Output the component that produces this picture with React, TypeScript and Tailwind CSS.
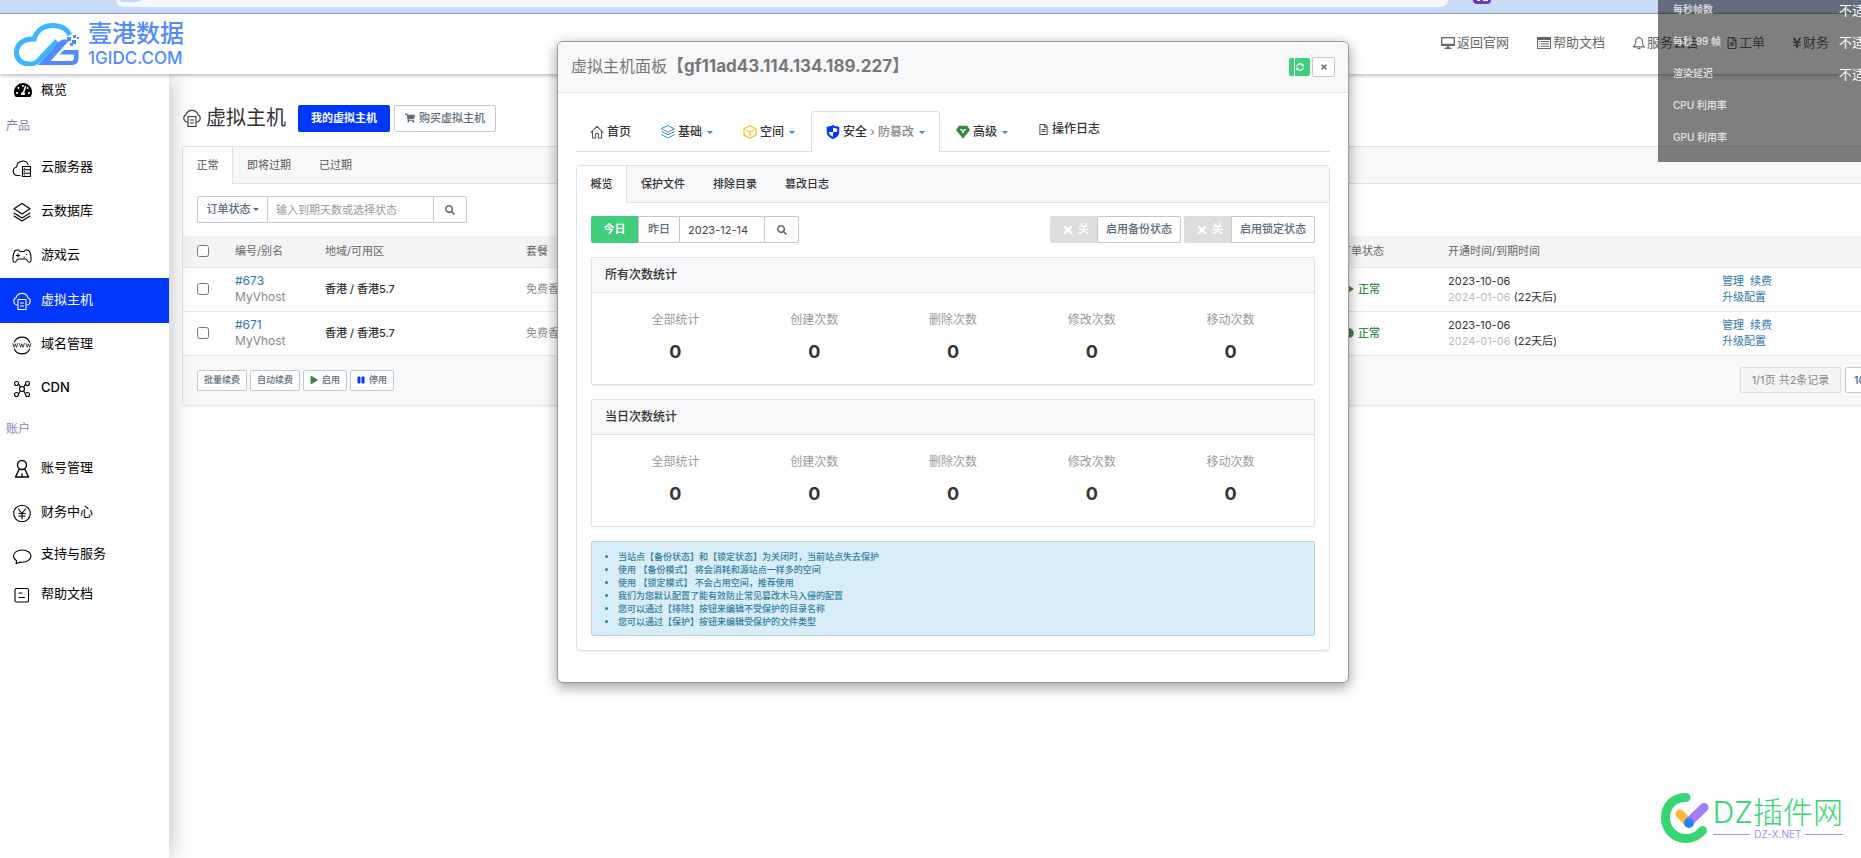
import React, { useState } from 'react';
import {
  FaCircle,
  FaPause,
  FaPlay,
  FaRegFileAlt,
  FaSearch,
  FaShoppingCart,
  FaSyncAlt,
  FaTachometerAlt,
  FaTimes,
  FaYenSign,
} from 'react-icons/fa';

type IconProps = { className?: string };

interface SvgProps extends IconProps {
  children: React.ReactNode;
}

const LineIcon: React.FC<SvgProps> = ({ className = 'size-5', children }) => (
  <svg
    viewBox="0 0 20 20"
    fill="none"
    stroke="currentColor"
    strokeWidth="1.1"
    strokeLinejoin="round"
    strokeLinecap="round"
    className={className}
    aria-hidden="true"
  >
    {children}
  </svg>
);

const CloudServerIcon: React.FC<IconProps> = ({ className }) => (
  <LineIcon className={className}>
    <path d="M8 17.500H5.500a4.300 4.300 0 0 1-.8-8.500 6 6 0 0 1 11.500-2.300" />
    <path d="M10.500 8.500h8v10h-8zM10.500 11.800h8M10.500 15.200h8M12.500 10.200h.2M12.500 13.500h.2M12.500 17h.2" />
  </LineIcon>
);

const LayersIcon: React.FC<IconProps> = ({ className }) => (
  <LineIcon className={className}>
    <path d="M10 1.500 18 6.700 10 12 2 6.700z" />
    <path d="m2 11 8 5 8-5M2 14l8 5 8-5" />
  </LineIcon>
);

const GamepadIcon: React.FC<IconProps> = ({ className }) => (
  <LineIcon className={className}>
    <path d="M5 4h1.500l1.300 1.500h4.400L13.500 4H15c2 0 2.700 1 3.200 3 .9 3.200 1 6.500.6 8-.5 1.500-1.800 1.700-2.800.5-.9-1.200-1.200-2.500-2.500-2.500h-7c-1.300 0-1.600 1.300-2.500 2.500-1 1.200-2.300 1-2.800-.5-.4-1.500-.3-4.800.6-8C2.300 5 3 4 5 4z" />
    <path d="M4.500 9.500h3M6 8v3M12 11h.3M14.500 8.500h.3" />
  </LineIcon>
);

const VhostIcon: React.FC<IconProps> = ({ className }) => (
  <LineIcon className={className}>
    <path d="M5 14A3.800 3.800 0 0 1 4 6.800a6.300 6.300 0 0 1 12 0A3.800 3.800 0 0 1 15 14" />
    <path d="M6 8.500h8v10H6zM8.500 12h3M8.500 15h3" />
  </LineIcon>
);

const GlobeWwwIcon: React.FC<IconProps> = ({ className }) => (
  <LineIcon className={className}>
    <path d="M2.300 7a8.500 8.500 0 0 1 15.400 0M2.300 14a8.500 8.500 0 0 0 15.400 0" />
    <path
      strokeWidth="0.7"
      d="m.8 8.500 1.300 3.800 1.200-3.500 1.200 3.500 1.300-3.800M7.400 8.500l1.300 3.800 1.200-3.500 1.200 3.500 1.300-3.800M14 8.500l1.300 3.800 1.200-3.500 1.200 3.500L19 8.500"
    />
  </LineIcon>
);

const CdnIcon: React.FC<IconProps> = ({ className }) => (
  <LineIcon className={className}>
    <circle cx="4.500" cy="4.500" r="2" />
    <circle cx="15.500" cy="4.500" r="2" />
    <circle cx="4.500" cy="15.500" r="2" />
    <circle cx="15.500" cy="15.500" r="2" />
    <circle cx="10" cy="10" r="2.500" />
    <path d="M6.500 4.800 8.300 8M13.500 4.800 11.700 8M6.500 15.200l1.800-3.200M13.500 15.200 11.700 12" />
  </LineIcon>
);

const UserIcon: React.FC<IconProps> = ({ className }) => (
  <LineIcon className={className}>
    <circle strokeWidth="1.400" cx="10" cy="6" r="4.500" />
    <path strokeWidth="1.400" d="M7 10.500 3.500 18h13L13 10.500M10 15v3" />
  </LineIcon>
);

const YenCircleIcon: React.FC<IconProps> = ({ className }) => (
  <LineIcon className={className}>
    <circle cx="10" cy="10.500" r="8.300" />
    <path d="m6.500 6 3.500 4.500L13.500 6M10 10.500V16M6.800 10.500h6.400M6.800 13h6.400" />
  </LineIcon>
);

const ChatIcon: React.FC<IconProps> = ({ className }) => (
  <LineIcon className={className}>
    <path d="M4 18.500c.5-1 .6-1.700.6-2.700C2.700 14.700 1.500 13 1.500 11c0-3.700 4-6 8.800-6s8.700 2.600 8.700 6-3.900 6.200-8.700 6.200c-1 0-1.800-.1-2.600-.2-1.100.8-2.300 1.300-3.700 1.500z" />
  </LineIcon>
);

const DocIcon: React.FC<IconProps> = ({ className }) => (
  <LineIcon className={className}>
    <rect x="3" y="3.500" width="13.500" height="13.500" rx="1.500" />
    <path d="M7 8h3M7 12.500h5.500" />
  </LineIcon>
);

const HomeIcon: React.FC<IconProps> = ({ className }) => (
  <LineIcon className={className}>
    <path strokeWidth="1.500" d="M1.500 10.500 10 2l8.500 8.500M3.500 9v9.500H8V12h4v6.500h4.500V9" />
  </LineIcon>
);

const CubeIcon: React.FC<IconProps> = ({ className }) => (
  <LineIcon className={className}>
    <path strokeWidth="1.800" d="M10 1 18.500 5.500v9L10 19l-8.500-4.500v-9z" />
    <path strokeWidth="1.800" d="M5.500 7.500 10 10l4.500-2.500M10 10v5" />
  </LineIcon>
);

const StackIcon: React.FC<IconProps> = ({ className }) => (
  <LineIcon className={className}>
    <path strokeWidth="1.400" d="M10 1 19 5.500 10 10 1 5.500z" />
    <path strokeWidth="1.400" d="m1 9.500 9 4.500 9-4.500M1 14l9 4.500 9-4.500" />
  </LineIcon>
);

const ShieldIcon: React.FC<IconProps> = ({ className }) => (
  <svg viewBox="0 0 20 20" className={className} aria-hidden="true">
    <path fill="#0037ff" d="M10 0c2.500 1.800 5.500 2.300 9 2.500v7c0 5-3.500 8.500-9 10.500-5.500-2-9-5.500-9-10.500v-7C4.500 2.300 7.500 1.800 10 0z" />
    <path fill="#fff" d="M10 3.500c2 1 3.800 1.300 6 1.500v5h-6zM4 10h6v6.800c-3.500-1.500-5.700-3.500-6-6.800z" />
  </svg>
);

const GemIcon: React.FC<IconProps> = ({ className }) => (
  <svg viewBox="0 0 20 20" className={className} aria-hidden="true">
    <path fill="#3c873f" d="M4 1h12l4 6-10 12.500L0 7z" />
    <path fill="none" stroke="#fff" strokeWidth="1.800" d="M6 6.500h2l2 4 2-4h2" />
  </svg>
);

const MonitorIcon: React.FC<IconProps> = ({ className }) => (
  <svg viewBox="0 0 16 14" className={className} aria-hidden="true">
    <path fill="currentColor" fillRule="evenodd" d="M1 1h14v9H1zM2.300 2.200v5.600h11.400V2.200zM7 10h2v1.500H7zM4.500 11.500h7V13h-7z" />
  </svg>
);

const ListIcon: React.FC<IconProps> = ({ className }) => (
  <svg viewBox="0 0 16 14" className={className} aria-hidden="true">
    <path fill="currentColor" fillRule="evenodd" d="M1 1h14v12H1zM2 4v8h12V4z" />
    <path stroke="currentColor" strokeWidth="1" d="M3 5.500h1M5 5.500h8M3 7.800h1M5 7.800h8M3 10.200h1M5 10.200h8" />
  </svg>
);

const BellIcon: React.FC<IconProps> = ({ className }) => (
  <LineIcon className={className}>
    <path strokeWidth="1.600" d="M10 2.500c-3.500 0-4.800 3-4.800 6.500 0 4-1.200 5-3.200 6.500h16c-2-1.500-3.200-2.500-3.200-6.500 0-3.500-1.300-6.500-4.800-6.500zM10 1v1M8.500 18h3" />
  </LineIcon>
);

const Caret: React.FC<IconProps> = ({ className = 'ml-0.5 text-[#3087d0]' }) => (
  <svg viewBox="0 0 8 4" className={`h-[3px] w-1.5 shrink-0 fill-current ${className}`} aria-hidden="true">
    <path d="M0 0h8L4 4z" />
  </svg>
);

const Logo: React.FC = () => (
  <a href="#home" className="flex items-center gap-2 text-[#4f8bff]" aria-label="壹港数据">
    <svg viewBox="0 0 66 44" className="h-11 w-[66px]" fill="none" aria-hidden="true">
      <path
        d="M56 13C50 1.500 31 0 23 11c-1.500 2.200-2.300 4-2.800 6C10 16 2.500 22 2.500 30.500 2.500 38 8 42 16 42c4 0 7-1.500 9.500-4.500L43 19"
        stroke="#3db5fb"
        strokeWidth="5"
      />
      <path d="M24 43 45 20c2-2 3.500-2.500 6-2.500h5L36.500 39H57c2 0 3-1 3-3v-3.500H45.500L50 28h14.500v8.500c0 4-2.500 6.500-6.500 6.500z" fill="#4f8bff" />
      <path d="M53 15h4v4h-4zM58 18h4v4h-4zM59 13h3v3h-3zM63 15h2v2h-2zM56 21h3v3h-3z" fill="#4f8bff" />
    </svg>
    <span className="flex flex-col">
      <span className="text-2xl leading-6 font-medium">壹港数据</span>
      <span className="mt-1 text-[17px] leading-4 font-medium">1GIDC.COM</span>
    </span>
  </a>
);

interface MenuItem {
  label: string;
  icon: React.FC<IconProps>;
  height?: string;
  active?: boolean;
}

const PRODUCTS: MenuItem[] = [
  { label: '云服务器', icon: CloudServerIcon },
  { label: '云数据库', icon: LayersIcon },
  { label: '游戏云', icon: GamepadIcon },
  { label: '虚拟主机', icon: VhostIcon, height: 'h-[45px]', active: true },
  { label: '域名管理', icon: GlobeWwwIcon },
  { label: 'CDN', icon: CdnIcon },
];

const ACCOUNT: MenuItem[] = [
  { label: '账号管理', icon: UserIcon },
  { label: '财务中心', icon: YenCircleIcon },
  { label: '支持与服务', icon: ChatIcon, height: 'h-10' },
  { label: '帮助文档', icon: DocIcon, height: 'h-10' },
];

const MenuLink: React.FC<{ item: MenuItem }> = ({ item }) => {
  const Icon = item.icon;
  return (
    <li>
      <a
        href="#menu"
        className={`flex items-center gap-[9px] pl-3 text-[13px] ${item.height ?? 'h-11'} ${
          item.active ? 'bg-[#0037ff] text-white' : 'text-black'
        }`}
      >
        <Icon className="size-5 shrink-0" />
        <span className={item.label === 'CDN' ? 'pb-0.5 font-medium' : 'pb-0.5'}>{item.label}</span>
      </a>
    </li>
  );
};

const Sidebar: React.FC = () => (
  <aside className="relative z-10 w-[169px] shrink-0 bg-white shadow-[0_0_24px_rgba(0,0,0,0.28)]">
    <a href="#overview" className="flex h-8 items-center gap-[9px] pl-3.5 text-[13px] text-black">
      <FaTachometerAlt className="size-[18px]" />
      概览
    </a>
    <h2 className="flex h-10 items-center pl-1.5 text-xs text-[#7b83b4]">产品</h2>
    <ul>
      {PRODUCTS.map((item) => (
        <MenuLink key={item.label} item={item} />
      ))}
    </ul>
    <h2 className="flex h-9 items-center pl-1.5 text-xs text-[#7b83b4]">账户</h2>
    <ul>
      {ACCOUNT.map((item) => (
        <MenuLink key={item.label} item={item} />
      ))}
    </ul>
  </aside>
);

const Header: React.FC = () => (
  <header className="relative z-20 flex h-[60px] items-center justify-between bg-white pr-8 pl-3.5 shadow-[0_1px_4px_rgba(0,0,0,0.35)]">
    <Logo />
    <nav className="flex items-center gap-[27px] pb-0.5 text-[13px] text-[#666] [&_a]:flex [&_a]:items-center [&_a]:gap-px">
      <a href="#site"><MonitorIcon className="h-3.5 w-4" />返回官网</a>
      <a href="#docs"><ListIcon className="h-3.5 w-4" />帮助文档</a>
      <a href="#notice"><BellIcon className="size-3.5" />服务公告</a>
      <a href="#ticket"><FaRegFileAlt className="h-3 w-3" />工单</a>
      <a href="#finance"><FaYenSign className="h-3 w-2.5" />财务</a>
    </nav>
  </header>
);

const HOSTS = [
  { id: '#673', name: 'MyVhost', icon: FaPlay },
  { id: '#671', name: 'MyVhost', icon: FaCircle },
];

const OUTLINE = 'border border-[#c5c9cd] bg-white font-medium text-[#5a6b7b]';
const SMALL_BTN = `flex h-[21px] items-center gap-1 rounded-xs px-1.5 text-[9px] ${OUTLINE}`;

const HostList: React.FC = () => (
  <main className="min-w-0 flex-1 overflow-hidden pt-[30px] pl-[13px]">
    <div className="flex items-center">
      <VhostIcon className="size-5 text-[#333]" />
      <h1 className="ml-1 text-xl leading-7 text-[#333]">虚拟主机</h1>
      <button className="ml-3 h-[27px] rounded-xs bg-[#0037ff] px-[13px] text-[11px] font-bold text-white">我的虚拟主机</button>
      <button className={`ml-1 flex h-[27px] items-center gap-1 rounded-xs px-2.5 text-[11px] ${OUTLINE}`}>
        <FaShoppingCart className="size-2.5" />
        购买虚拟主机
      </button>
    </div>

    <section className="mt-3.5 min-w-[1740px] rounded-sm border border-[#dee2e8] bg-white shadow-xs">
      <div className="flex h-[37px] border-b border-[#dee2e8] bg-[#f7f8fa] text-[11px] text-[#555]">
        <button className="-mb-px w-[50px] border-r border-[#dee2e8] bg-white">正常</button>
        <button className="px-3.5">即将过期</button>
        <button className="px-3.5">已过期</button>
      </div>

      <div className="flex px-3.5 pt-3 pb-[13px] text-[11px]">
        <button className={`flex h-[27px] w-[71px] items-center justify-center gap-0.5 rounded-l-xs ${OUTLINE}`}>
          订单状态
          <Caret className="text-[#5a6b7b]" />
        </button>
        <input
          aria-label="输入到期天数或选择状态"
          placeholder="输入到期天数或选择状态"
          className="h-[27px] w-[165px] border-y border-[#c5c9cd] px-2 placeholder:text-[#999]"
        />
        <button aria-label="搜索" className={`flex h-[27px] w-[34px] items-center justify-center rounded-r-xs ${OUTLINE}`}>
          <FaSearch className="size-2.5" />
        </button>
      </div>

      <table className="w-full table-fixed text-left text-[11px] leading-4">
        <colgroup>
          <col className="w-[52px]" />
          <col className="w-[90px]" />
          <col className="w-[201px]" />
          <col className="w-[814px]" />
          <col className="w-[108px]" />
          <col className="w-[274px]" />
          <col />
        </colgroup>
        <thead>
          <tr className="h-[31px] border-b border-[#e5e7e9] bg-[#f4f4f4] text-[#666] [&>th]:font-normal">
            <th className="pl-3.5"><input type="checkbox" aria-label="全选" className="block size-3" /></th>
            <th>编号/别名</th>
            <th>地域/可用区</th>
            <th>套餐</th>
            <th>订单状态</th>
            <th>开通时间/到期时间</th>
            <th />
          </tr>
        </thead>
        <tbody>
          {HOSTS.map(({ id, name, icon: Icon }) => (
            <tr key={id} className="h-11 border-b border-[#e5e7e9] text-[#333]">
              <td className="pl-3.5"><input type="checkbox" aria-label={id} className="block size-3" /></td>
              <td className="text-xs leading-4">
                <a href="#host" className="block text-[#3079a8]">{id}</a>
                <span className="text-[#888]">{name}</span>
              </td>
              <td className="font-medium">香港 / 香港5.7</td>
              <td className="text-[#888]">免费香港</td>
              <td className="font-medium text-[#3c873f]">
                <span className="flex items-center gap-1 pl-1"><Icon className="size-2.5" />正常</span>
              </td>
              <td>
                2023-10-06
                <br />
                <span className="text-[#bbb]">2024-01-06</span> (22天后)
              </td>
              <td className="text-[#3079a8]">
                <a href="#manage" className="mr-1.5">管理</a>
                <a href="#renew">续费</a>
                <br />
                <a href="#upgrade">升级配置</a>
              </td>
            </tr>
          ))}
        </tbody>
      </table>

      <div className="flex h-[49px] items-center justify-between bg-[#f7f8fa] px-3.5">
        <div className="flex gap-[3px]">
          <button className={SMALL_BTN}>批量续费</button>
          <button className={SMALL_BTN}>自动续费</button>
          <button className={SMALL_BTN}><FaPlay className="size-2 text-[#3c873f]" />启用</button>
          <button className={SMALL_BTN}><FaPause className="size-2 text-[#0037ff]" />停用</button>
        </div>
        <div className="flex gap-1 text-[11px]">
          <span className="flex h-[26px] w-[101px] items-center justify-center rounded-xs border border-[#ddd] bg-[#f4f4f4] text-[#888]">
            1/1页 共2条记录
          </span>
          <select aria-label="每页条数" className={`h-[26px] w-[62px] rounded-xs px-1 ${OUTLINE}`}>
            <option>10</option>
            <option>20</option>
          </select>
        </div>
      </div>
    </section>
  </main>
);

const STAT_LABELS = ['全部统计', '创建次数', '删除次数', '修改次数', '移动次数'];

const StatCard: React.FC<{ title: string }> = ({ title }) => (
  <section className="mt-3.5 rounded-xs border border-[#dee2e8] shadow-xs">
    <h3 className="flex h-[35px] items-center border-b border-[#dee2e8] bg-[#f7f8fa] px-[13px] text-xs font-medium text-[#333]">
      {title}
    </h3>
    <dl className="grid h-[91px] grid-cols-5 px-3.5 pt-[18px] text-center">
      {STAT_LABELS.map((label) => (
        <div key={label}>
          <dt className="text-xs leading-[18px] text-[#999]">{label}</dt>
          <dd className="mt-[11px] text-lg leading-6 font-bold text-[#333]">0</dd>
        </div>
      ))}
    </dl>
  </section>
);

const TIPS = [
  '当站点【备份状态】和【锁定状态】为关闭时，当前站点失去保护',
  '使用 【备份模式】 将会消耗和源站点一样多的空间',
  '使用 【锁定模式】 不会占用空间，推荐使用',
  '我们为您默认配置了能有效防止常见篡改木马入侵的配置',
  '您可以通过【排除】按钮来编辑不受保护的目录名称',
  '您可以通过【保护】按钮来编辑受保护的文件类型',
];

const SUB_TABS = ['概览', '保护文件', '排除目录', '篡改日志'];

const SwitchGroup: React.FC<{ label: string }> = ({ label }) => (
  <div className="flex">
    <button className="flex h-[27px] w-[47px] items-center justify-center gap-1 rounded-l-xs bg-[#ddd] pl-1 font-bold text-white">
      <FaTimes className="size-3" />关
    </button>
    <button className={`h-[27px] w-[84px] rounded-r-xs ${OUTLINE}`}>{label}</button>
  </div>
);

const HostPanel: React.FC = () => {
  const [date, setDate] = useState('2023-12-14');

  return (
    <div className="absolute inset-x-0 top-[41px] z-30 flex justify-center pl-[45px]">
      <div role="dialog" aria-label="虚拟主机面板" className="w-[792px] rounded-md border border-[#999] bg-white shadow-[0_4px_14px_rgba(0,0,0,0.4)]">
        <div className="flex h-[51px] items-center justify-between rounded-t-md border-b border-[#dee2e8] bg-[#f7f8fa] px-[13px]">
          <h2 className="text-base text-[#777]">
            虚拟主机面板<b className="text-[17px]">【gf11ad43.114.134.189.227】</b>
          </h2>
          <div className="flex items-center gap-0.5">
            <button aria-label="刷新" className="flex h-[18px] w-[21px] items-center rounded-xs bg-[#3fce7c] pl-[5px] text-white">
              <span className="h-[18px] border-l border-white" />
              <FaSyncAlt className="ml-px size-2" />
            </button>
            <button aria-label="关闭" className={`flex h-5 w-[23px] items-center justify-center rounded-xs ${OUTLINE}`}>
              <FaTimes className="size-2" />
            </button>
          </div>
        </div>

        <div className="px-[18px] pt-[18px] pb-[31px]">
          <nav className="flex h-[41px] gap-0.5 border-b border-[#ddd] text-xs font-medium text-[#333] [&>a]:flex [&>a]:items-center [&>a]:gap-[3px] [&>a]:px-3.5">
            <a href="#index" className="pt-0.5"><HomeIcon className="size-3.5 text-[#555]" />首页</a>
            <a href="#base" className="pt-0.5"><StackIcon className="size-3.5 text-[#3087b8]" />基础<Caret /></a>
            <a href="#space" className="pt-0.5"><CubeIcon className="size-3.5 text-[#fcc01e]" />空间<Caret /></a>
            <a href="#safe" className="-mb-px rounded-t-sm border border-b-0 border-[#ddd] bg-white">
              <ShieldIcon className="size-3.5" />
              安全
              <span className="text-[#888]">›</span>
              <span className="text-[#888]">防篡改</span>
              <Caret />
            </a>
            <a href="#advanced" className="pt-0.5"><GemIcon className="size-3.5" />高级<Caret /></a>
            <a href="#log" className="pb-1"><FaRegFileAlt className="size-[11px] text-[#555]" />操作日志</a>
          </nav>

          <div className="mt-[13px] rounded-sm border border-[#dee2e8] shadow-xs">
            <div className="flex h-[37px] border-b border-[#dee2e8] bg-[#f7f8fa] text-[11px] font-medium text-[#333]">
              {SUB_TABS.map((tab, i) => (
                <button key={tab} className={i === 0 ? '-mb-px w-[50px] border-r border-[#dee2e8] bg-white' : 'px-3.5'}>
                  {tab}
                </button>
              ))}
            </div>

            <div className="px-3.5 pt-[13px] pb-3.5">
              <div className="flex justify-between text-[11px]">
                <div className="flex">
                  <button className="h-[27px] w-[47px] rounded-l-xs bg-[#3fce7c] font-bold text-white">今日</button>
                  <button className={`h-[27px] w-[42px] ${OUTLINE}`}>昨日</button>
                  <input
                    aria-label="日期"
                    value={date}
                    onChange={(e) => setDate(e.target.value)}
                    className="h-[27px] w-[84px] border-y border-[#c5c9cd] px-2 text-[#444]"
                  />
                  <button aria-label="查询" className={`flex h-[27px] w-[35px] items-center justify-center rounded-r-xs ${OUTLINE}`}>
                    <FaSearch className="size-2.5" />
                  </button>
                </div>
                <div className="flex gap-[3px]">
                  <SwitchGroup label="启用备份状态" />
                  <SwitchGroup label="启用锁定状态" />
                </div>
              </div>

              <StatCard title="所有次数统计" />
              <StatCard title="当日次数统计" />

              <ul className="mt-3.5 list-disc rounded-xs border border-[#b5d5e2] bg-[#d9edf7] pt-2 pb-[7px] pl-[26px] text-[9px] leading-[13px] font-medium text-[#31809f]">
                {TIPS.map((tip) => (
                  <li key={tip}>{tip}</li>
                ))}
              </ul>
            </div>
          </div>
        </div>
      </div>
    </div>
  );
};

const METRICS = [
  { label: '每秒帧数', value: '不适用' },
  { label: '每秒 99 帧', value: '不适用' },
  { label: '渲染延迟', value: '不适用' },
  { label: 'CPU 利用率', value: '' },
  { label: 'GPU 利用率', value: '' },
];

const PerfOverlay: React.FC = () => (
  <div className="absolute top-0 right-0 z-40 h-[162px] w-[203px] overflow-hidden bg-black/50 pl-[15px] text-white">
    {METRICS.map((m) => (
      <div key={m.label} className="flex h-8 w-[210px] justify-between whitespace-nowrap">
        <span className="pt-px text-[10px] leading-4 font-medium text-white/80">{m.label}</span>
        <span className="w-11 pt-px text-[13px] leading-[18px]">{m.value}</span>
      </div>
    ))}
  </div>
);

const Watermark: React.FC = () => (
  <div className="absolute right-[18px] bottom-3.5 z-40 flex items-center gap-1">
    <svg viewBox="0 0 48 52" className="h-[52px] w-12" fill="none" strokeLinecap="round" aria-hidden="true">
      <path d="M25 5.500C13 5 4.500 14 4.500 25.500S13 46.500 25 46.500c7 0 12-2.500 16.500-8" stroke="#35d673" strokeWidth="9" />
      <path d="m19 22 8 8.500" stroke="#ffb536" strokeWidth="9" />
      <path d="m28 30 15-14.500" stroke="#a27dfc" strokeWidth="9" />
      <circle cx="28" cy="31" r="5" fill="#1b86f9" />
    </svg>
    <div>
      <div className="text-[30px] leading-8 font-light text-[#35d673]">DZ插件网</div>
      <div className="flex items-center gap-1 text-[10px] leading-3 text-[#a88bf5]">
        <span className="h-px flex-1 bg-[#a88bf5]" />
        DZ-X.NET
        <span className="h-px flex-1 bg-[#a88bf5]" />
      </div>
    </div>
  </div>
);

const App: React.FC = () => (
  <div className="relative flex min-h-screen flex-col overflow-hidden bg-white font-['Inter','Noto_Sans_CJK_SC',sans-serif]">
    <div className="h-3.5 shrink-0 border-b border-[#9fb2cc] bg-[#c9dbf6] pr-[413px] pl-[116px]">
      <div className="relative h-[7px] rounded-b-full bg-[#f3f7fe]">
        <span className="absolute top-0 left-1 h-0.5 w-5 rounded-b-full bg-[#c9dbf6]" />
        <span className="absolute top-0 -right-[43px] flex h-1 w-[18px] justify-center gap-[3px] rounded-b-sm bg-[#6938c0]">
          <span className="h-px w-[3px] bg-white" />
          <span className="h-px w-[5px] bg-white" />
        </span>
      </div>
    </div>
    <Header />
    <div className="flex flex-1">
      <Sidebar />
      <HostList />
    </div>
    <HostPanel />
    <PerfOverlay />
    <Watermark />
  </div>
);

export default App;
